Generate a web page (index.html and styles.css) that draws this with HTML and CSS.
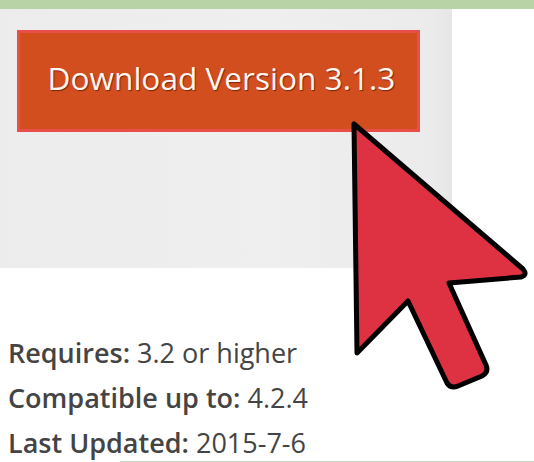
FILE: index.html
```html
<!DOCTYPE html>
<html>
<head>
<meta charset="utf-8">
<link rel="stylesheet" href="styles.css">
</head>
<body>
<div class="page">
  <div class="topbar"></div>
  <div class="row">
    <div class="panel">
      <div class="btn">Download Version 3.1.3</div>
    </div>
  </div>
  <div class="info">
    <div class="line"><span class="lbl">Requires:</span> 3.2 or higher</div>
    <div class="line"><span class="lbl">Compatible up to:</span> 4.2.4</div>
    <div class="line"><span class="lbl">Last Updated:</span> 2015-7-6</div>
  </div>
  <div class="rule"></div>
  <svg class="cursor" width="534" height="462" viewBox="0 0 534 462">
    <path d="M354 124 L357 353 L408 301 L447 383 Q451 389 458 386 L482 376 Q489 372 486 365 L449 283 L521 277 Q528 275 523 269 Z" fill="#de3243" stroke="#000" stroke-width="5" stroke-linejoin="round"/>
  </svg>
</div>
</body>
</html>
```
FILE: styles.css
```css
html, body {
  margin: 0;
  padding: 0;
  background: #fff;
}
.page {
  position: relative;
  width: 534px;
  height: 462px;
  overflow: hidden;
  font-family: "Open Sans", "Liberation Sans", sans-serif;
}
.topbar {
  height: 9px;
  background: #b8d4a6;
}
.row {
  display: flex;
}
.panel {
  width: 452px;
  height: 259px;
  box-sizing: border-box;
  padding: 21px 0 0 17px;
  background: linear-gradient(to right, #ececec 0%, #efefef 60%, #ebebeb 96%, #e6e6e6 100%);
}
.btn {
  width: 403px;
  height: 102px;
  box-sizing: border-box;
  border: 3px solid #e84f48;
  background: #d24e1e;
  color: #fff6ef;
  font-size: 31.6px;
  display: flex;
  align-items: center;
  justify-content: center;
  padding-bottom: 8px;
  padding-left: 6px;
  text-shadow: 1px 1px 1px rgba(90, 20, 0, 0.7);
}
.info {
  height: 193px;
  box-sizing: border-box;
  padding: 62px 0 0 8px;
  color: #444;
  font-size: 27px;
}
.line {
  line-height: 45px;
  white-space: nowrap;
}
.lbl {
  font-weight: 600;
}
.rule {
  margin-left: 120px;
  height: 2px;
  background: #c6dcba;
}
.cursor {
  position: absolute;
  left: 0;
  top: 0;
}
```
